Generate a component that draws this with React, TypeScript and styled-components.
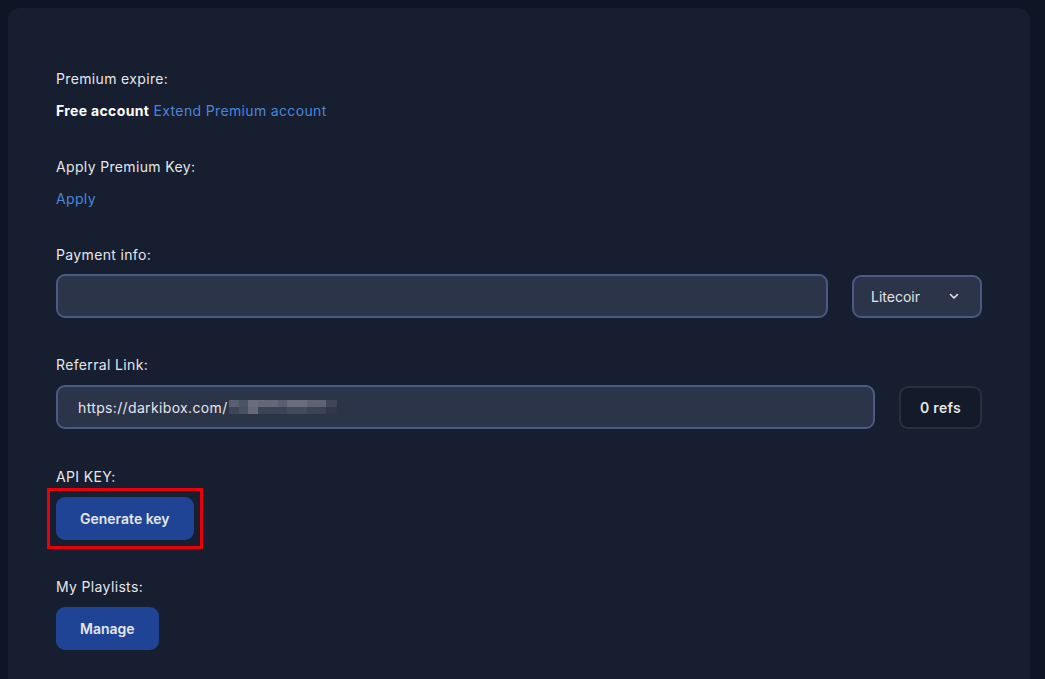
import React from 'react';
import styled, { createGlobalStyle } from 'styled-components';

const GlobalStyle = createGlobalStyle`
  html, body {
    margin: 0;
    padding: 0;
    background: #0f1524;
    font-family: Inter, "Open Sans", sans-serif;
    letter-spacing: 0.35px;
    color: #e5e7eb;
  }
  * {
    box-sizing: border-box;
  }
`;

const Page = styled.div`
  padding: 8px 15px 0 8px;
  min-height: 679px;
`;

const Card = styled.div`
  background: #161e30;
  border-radius: 12px;
  padding: 61px 48px 40px;
  min-height: 700px;
  display: flex;
  flex-direction: column;
`;

const Section = styled.section<{ $gap?: number; $top?: number }>`
  display: flex;
  flex-direction: column;
  gap: ${({ $gap }) => $gap ?? 12}px;
  margin-top: ${({ $top }) => $top ?? 36}px;

  &:first-child {
    margin-top: 0;
  }
`;

const Label = styled.div`
  font-size: 14px;
  line-height: 20px;
  color: #e5e7eb;
`;

const Value = styled.div`
  font-size: 14px;
  line-height: 20px;
`;

const Strong = styled.span`
  font-weight: 700;
  color: #fff;
`;

const Link = styled.a`
  color: #4a86d9;
  text-decoration: none;
  cursor: pointer;
`;

const Row = styled.div`
  display: flex;
  gap: 24px;
  align-items: center;
`;

const Input = styled.input`
  flex: 1;
  height: 44px;
  background: #2c3449;
  border: 2px solid #4a5a86;
  border-radius: 9px;
  padding: 0 20px;
  color: #e5e7eb;
  font: inherit;
  font-size: 14px;
  outline: none;
`;

const LinkField = styled.div`
  flex: 1;
  height: 44px;
  background: #2c3449;
  border: 2px solid #4a5a86;
  border-radius: 9px;
  padding: 0 20px;
  display: flex;
  align-items: center;
  font-size: 14px;
  color: #e5e7eb;
`;

const Select = styled.button`
  width: 130px;
  height: 43px;
  background: #2c3449;
  border: 2px solid #4a5a86;
  border-radius: 9px;
  padding: 0 21px 0 17px;
  display: flex;
  align-items: center;
  justify-content: space-between;
  color: #e5e7eb;
  font: inherit;
  font-size: 14px;
  cursor: pointer;
`;

const SelectText = styled.span`
  width: 49px;
  overflow: hidden;
  white-space: nowrap;
  text-align: left;
`;

const Blur = styled.span`
  display: inline-flex;
  flex-direction: column;
  width: 108px;
  height: 14px;
  margin-left: 1px;
`;

const BlurRow = styled.span<{ $tone: string }>`
  flex: 1;
  background: ${({ $tone }) => $tone};
`;

const RefsBox = styled.div`
  width: 83px;
  height: 43px;
  border: 2px solid #2a2f3b;
  background: #131a2a;
  border-radius: 9px;
  display: flex;
  align-items: center;
  justify-content: center;
  font-size: 14px;
  font-weight: 600;
  color: #e5e7eb;
`;

const Highlight = styled.div`
  align-self: flex-start;
  margin: -9px;
  padding: 6px;
  border: 3px solid #e8000b;
`;

const Button = styled.button`
  align-self: flex-start;
  display: block;
  height: 43px;
  padding: 0 24px;
  background: #1f4496;
  border: none;
  border-radius: 9px;
  color: #e5e7eb;
  font: inherit;
  font-size: 14px;
  font-weight: 600;
  cursor: pointer;
`;

const Chevron = () => (
  <svg width="10" height="7" viewBox="0 0 10 7" fill="none" stroke="#e5e7eb" strokeWidth="1.6" strokeLinecap="round" strokeLinejoin="round">
    <path d="M1.5 1.5l3.5 3.5 3.5-3.5" />
  </svg>
);

const blurTop =
  'linear-gradient(90deg, #5a5f70 0 9%, #4d5366 9% 18%, #6a6e7c 18% 27%, #636879 27% 45%, #585e70 45% 54%, #6a6e7c 54% 72%, #5e6374 72% 90%, #3f4658 90% 100%)';
const blurBottom =
  'linear-gradient(90deg, #3e4557 0 9%, #4a5062 9% 18%, #666a78 18% 27%, #3c4355 27% 54%, #434a5b 54% 72%, #3c4355 72% 90%, #2f3748 90% 100%)';

const App: React.FC = () => {
  return (
    <>
      <GlobalStyle />
      <Page>
        <Card>
          <Section>
            <Label>Premium expire:</Label>
            <Value>
              <Strong>Free account</Strong> <Link>Extend Premium account</Link>
            </Value>
          </Section>
          <Section>
            <Label>Apply Premium Key:</Label>
            <Value>
              <Link>Apply</Link>
            </Value>
          </Section>
          <Section $gap={9}>
            <Label>Payment info:</Label>
            <Row>
              <Input type="text" />
              <Select>
                <SelectText>Litecoin</SelectText>
                <Chevron />
              </Select>
            </Row>
          </Section>
          <Section $gap={10} $top={37}>
            <Label>Referral Link:</Label>
            <Row>
              <LinkField>
                https://darkibox.com/
                <Blur>
                  <BlurRow $tone={blurTop} />
                  <BlurRow $tone={blurBottom} />
                </Blur>
              </LinkField>
              <RefsBox>0 refs</RefsBox>
            </Row>
          </Section>
          <Section $gap={10} $top={38}>
            <Label>API KEY:</Label>
            <Highlight>
              <Button>Generate key</Button>
            </Highlight>
          </Section>
          <Section $gap={10} $top={37}>
            <Label>My Playlists:</Label>
            <Button>Manage</Button>
          </Section>
        </Card>
      </Page>
    </>
  );
};

export default App;
